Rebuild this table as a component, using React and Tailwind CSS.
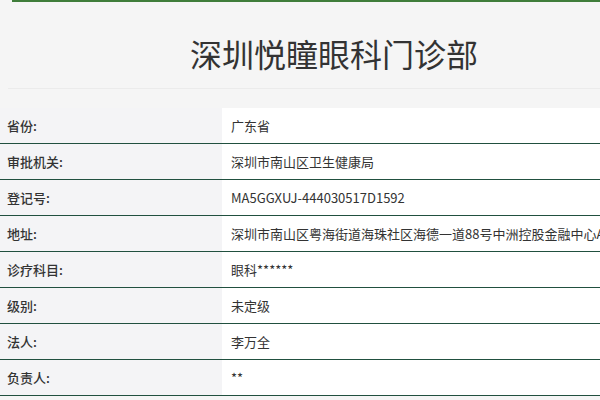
import React from 'react';

const rows = [
    { label: '省份:', value: '广东省' },
    { label: '审批机关:', value: '深圳市南山区卫生健康局' },
    { label: '登记号:', value: 'MA5GGXUJ-444030517D1592' },
    { label: '地址:', value: '深圳市南山区粤海街道海珠社区海德一道88号中洲控股金融中心A栋' },
    { label: '诊疗科目:', value: '眼科******' },
    { label: '级别:', value: '未定级' },
    { label: '法人:', value: '李万全' },
    { label: '负责人:', value: '**' },
];

const App = () => {
    return (
        <div
            className="w-[600px] h-[400px] overflow-hidden bg-[#f5f5f5] text-[#333]"
            style={{ fontFamily: '"Microsoft YaHei", "Noto Sans CJK SC", "Noto Sans", sans-serif' }}
        >
            <div className="ml-[12px] h-[2px] bg-[#3f7d3a]"></div>

            <div className="h-[87px] flex items-center justify-center border-b border-[#ebebeb] ml-[8px]">
                <h1 className="text-[32px] font-normal text-[#333] pl-[60px] pt-[16px]">深圳悦瞳眼科门诊部</h1>
            </div>

            <div className="mt-[19px]">
                {rows.map(row => (
                    <div key={row.label} className="flex h-[36px] border-b border-[#21503f]">
                        <div className="w-[222px] shrink-0 flex items-center pl-[7px] bg-[#f4f4f6] text-[13px] font-medium text-[#333]">
                            {row.label}
                        </div>
                        <div className="flex-1 flex items-center pl-[9px] bg-white text-[13px] text-[#333] whitespace-nowrap overflow-hidden">
                            {row.value}
                        </div>
                    </div>
                ))}
            </div>
        </div>
    );
};

export default App;
